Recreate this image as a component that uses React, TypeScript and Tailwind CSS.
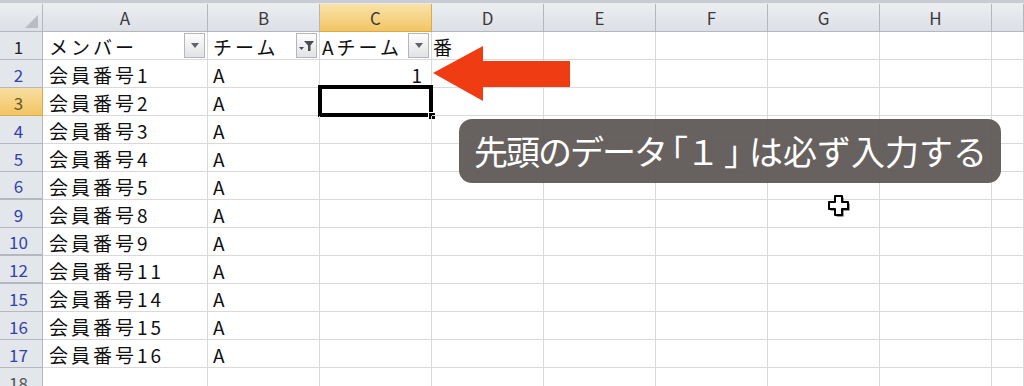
import React from "react";

const COLS = ["A", "B", "C", "D", "E", "F", "G", "H", ""];
const FONT = { fontFamily: '"Noto Sans CJK JP", "Noto Sans", sans-serif' };

type Row = { n: string; a?: string; b?: string; c?: string; d?: string; kind: "black" | "blue" | "sel" | "gray"; thick?: boolean };

const ROWS: Row[] = [
  { n: "1", a: "メンバー", b: "チーム", c: "Aチーム", d: "番", kind: "black" },
  { n: "2", a: "会員番号1", b: "A", c: "1", kind: "blue" },
  { n: "3", a: "会員番号2", b: "A", kind: "sel" },
  { n: "4", a: "会員番号3", b: "A", kind: "blue" },
  { n: "5", a: "会員番号4", b: "A", kind: "blue" },
  { n: "6", a: "会員番号5", b: "A", kind: "blue", thick: true },
  { n: "9", a: "会員番号8", b: "A", kind: "blue" },
  { n: "10", a: "会員番号9", b: "A", kind: "blue", thick: true },
  { n: "12", a: "会員番号11", b: "A", kind: "blue", thick: true },
  { n: "15", a: "会員番号14", b: "A", kind: "blue" },
  { n: "16", a: "会員番号15", b: "A", kind: "blue" },
  { n: "17", a: "会員番号16", b: "A", kind: "blue" },
  { n: "18", kind: "gray" },
];

function DropBtn() {
  return (
    <div className="absolute right-[2px] top-[1px] w-[21px] h-[25px] border border-[#b3b7bc] bg-gradient-to-b from-[#fdfdfd] to-[#e2e3e6] flex items-center justify-center">
      <svg width="10" height="6" viewBox="0 0 10 6">
        <polygon points="1,0 9,0 5,5" fill="#5f636a" />
      </svg>
    </div>
  );
}

function FilterBtn() {
  return (
    <div className="absolute right-[2px] top-[1px] w-[21px] h-[25px] border border-[#b3b7bc] bg-gradient-to-b from-[#fdfdfd] to-[#e2e3e6] flex items-center justify-center">
      <svg width="17" height="14" viewBox="0 0 17 14">
        <polygon points="6,2 16,2 12.5,6.5 12.5,12 10,12 10,6.5" fill="#4a4e54" />
        <polygon points="1,8 6,8 3.5,11" fill="#4a4e54" />
      </svg>
    </div>
  );
}

const cellBase = "relative h-[28px] border-r border-b border-[#d9d9d9] flex items-end text-[19px] leading-[24px] tracking-[3px] text-[#111] whitespace-nowrap";

export default function App() {
  return (
    <div className="relative w-[1024px] h-[386px] overflow-hidden bg-white" style={FONT}>
      <div className="h-[4px] bg-[#c9cdd3] border-b border-[#e8eaee]" />
      <div className="grid grid-cols-[43px_165px_112px_112px_112px_112px_112px_112px_112px_1fr]">
        {/* header row */}
        <div className="relative h-[28px] bg-gradient-to-b from-[#eceef2] to-[#dcdfe4] border-r border-b border-[#b4b8be]">
          <svg className="absolute right-[4px] bottom-[3px]" width="13" height="13" viewBox="0 0 13 13">
            <polygon points="13,0 13,13 0,13" fill="#b9bdc3" />
          </svg>
        </div>
        {COLS.map((c, i) => (
          <div
            key={"h" + i}
            className={
              c === "C"
                ? "h-[28px] flex items-center justify-center bg-gradient-to-b from-[#f9e3a8] to-[#f2c564] border-r border-b border-[#d9a94a] text-[17px] text-[#3a3a3a]"
                : "h-[28px] flex items-center justify-center bg-gradient-to-b from-[#eceef2] to-[#dcdfe4] border-r border-b border-[#b4b8be] text-[17px] text-[#3a3a3a]"
            }
          >
            {c}
          </div>
        ))}
        {ROWS.map((r) => (
          <React.Fragment key={r.n}>
            <div
              className={
                (r.kind === "sel"
                  ? "bg-gradient-to-b from-[#f9dea0] to-[#f2c462] text-[#6a5526] border-[#d9a94a] "
                  : "bg-[#e3e6eb] border-[#b4b8be] " +
                    (r.kind === "blue" ? "text-[#3343a8] " : r.kind === "gray" ? "text-[#555] " : "text-[#222] ")) +
                (r.thick ? "border-b-2 " : "border-b ") +
                "h-[28px] border-r flex items-end justify-center pr-[5px] text-[17px] leading-[24px]"
              }
            >
              {r.n}
            </div>
            <div className={cellBase + " pl-[6px]"}>
              {r.a}
              {r.n === "1" && <DropBtn />}
            </div>
            <div className={cellBase + " pl-[5px]"}>
              {r.b}
              {r.n === "1" && <FilterBtn />}
            </div>
            <div className={cellBase + (r.n === "2" ? " justify-end pr-[6px]" : " pl-[2px]")}>
              {r.c}
              {r.n === "1" && <DropBtn />}
              {r.n === "3" && (
                <>
                  <div className="absolute left-[-2px] top-[-3px] right-[-2px] bottom-[-2px] border-[4px] border-black" />
                  <div className="absolute right-[-5px] bottom-[-5px] w-[8px] h-[8px] bg-black border border-white" />
                </>
              )}
            </div>
            <div className={cellBase + " pl-[1px] tracking-normal"}>{r.d}</div>
            {[0, 1, 2, 3, 4].map((k) => (
              <div key={k} className="h-[28px] border-r border-b border-[#d9d9d9]" />
            ))}
          </React.Fragment>
        ))}
      </div>

      {/* arrow */}
      <svg className="absolute left-[430px] top-[44px]" width="144" height="60" viewBox="0 0 144 60">
        <polygon points="3,29 53,2 53,17 140,17 140,43 53,43 53,57" fill="#f03c13" />
      </svg>

      {/* caption */}
      <div className="absolute left-[459px] top-[119px] w-[542px] h-[64px] rounded-[13px] bg-[#5f5a56]/95 flex items-center pl-[15px]">
        <span className="text-white text-[34px] tracking-[-2px] leading-none whitespace-nowrap">
          先頭のデータ<span className="-ml-[12px]">「</span>１<span className="ml-[6px] -mr-[7px]">」</span>
          <span className="tracking-normal">は必ず入力する</span>
        </span>
      </div>

      {/* cursor */}
      <svg className="absolute left-[826px] top-[193px]" width="26" height="26" viewBox="0 0 26 26">
        <polygon points="9,3 16,3 16,9 22,9 22,16 16,16 16,22 9,22 9,16 3,16 3,9 9,9" fill="#333" transform="translate(1.5,1.5)" />
        <polygon points="9,3 16,3 16,9 22,9 22,16 16,16 16,22 9,22 9,16 3,16 3,9 9,9" fill="#fff" stroke="#000" strokeWidth="2" strokeLinejoin="round" />
      </svg>
    </div>
  );
}
